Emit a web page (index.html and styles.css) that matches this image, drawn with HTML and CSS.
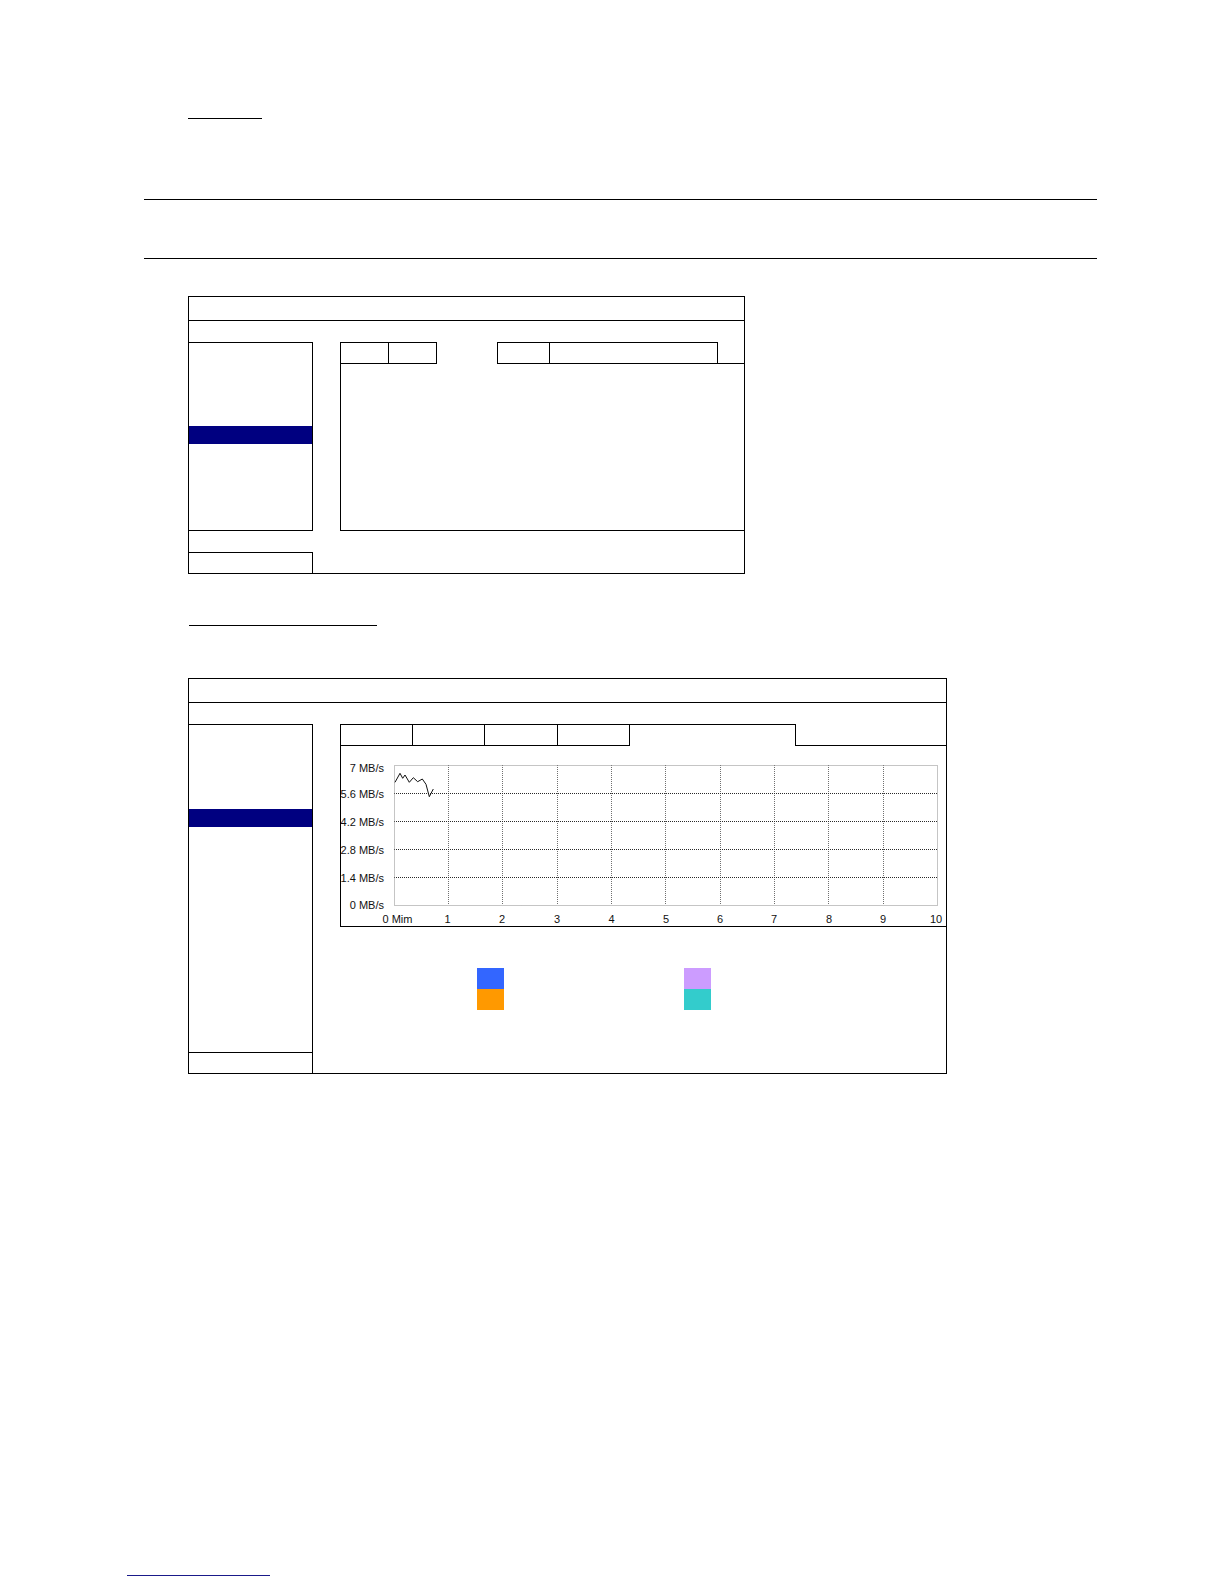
FILE: index.html
```html
<!DOCTYPE html>
<html lang="en">
<head>
<meta charset="utf-8">
<title>Manual page</title>
<link rel="stylesheet" href="styles.css">
</head>
<body>
<div class="page">
  <div class="heading-rule heading-rule--short"></div>

  <div class="section-rule section-rule--first"></div>
  <div class="section-rule section-rule--second"></div>

  <div class="screen screen--one">
    <div class="screen__title"></div>
    <div class="screen__body">
      <div class="side side--boxed">
        <div class="side__menu">
          <div class="side__selected side__selected--one"></div>
        </div>
        <div class="side__foot side__foot--detached"></div>
      </div>
      <div class="main main--one">
        <div class="tabs">
          <div class="tab tab--w48"></div>
          <div class="tab tab--w48"></div>
          <div class="tab tab--open tab--w60"></div>
          <div class="tab tab--boxed tab--w53"></div>
          <div class="tab tab--w168"></div>
          <div class="tab-fill"></div>
        </div>
        <div class="main__content"></div>
      </div>
    </div>
  </div>

  <div class="heading-rule heading-rule--long"></div>

  <div class="screen screen--two">
    <div class="screen__title"></div>
    <div class="screen__body">
      <div class="side side--full">
        <div class="side__menu side__menu--grow">
          <div class="side__selected side__selected--two"></div>
        </div>
        <div class="side__foot"></div>
      </div>
      <div class="right">
        <div class="main main--two">
          <div class="tabs">
            <div class="tab tab--w72"></div>
            <div class="tab tab--w72"></div>
            <div class="tab tab--w73"></div>
            <div class="tab tab--w72"></div>
            <div class="tab tab--current tab--w166"></div>
            <div class="tab-fill"></div>
          </div>
          <div class="chart">
            <svg class="chart__svg" width="605" height="180" viewBox="0 0 605 180" xmlns="http://www.w3.org/2000/svg">
              <g class="grid-cols">
                <line x1="107.5" y1="19" x2="107.5" y2="159"/>
                <line x1="161.5" y1="19" x2="161.5" y2="159"/>
                <line x1="216.5" y1="19" x2="216.5" y2="159"/>
                <line x1="270.5" y1="19" x2="270.5" y2="159"/>
                <line x1="324.5" y1="19" x2="324.5" y2="159"/>
                <line x1="379.5" y1="19" x2="379.5" y2="159"/>
                <line x1="433.5" y1="19" x2="433.5" y2="159"/>
                <line x1="487.5" y1="19" x2="487.5" y2="159"/>
                <line x1="542.5" y1="19" x2="542.5" y2="159"/>
              </g>
              <g class="grid-rows">
                <line x1="53" y1="47.5" x2="597" y2="47.5"/>
                <line x1="53" y1="75.5" x2="597" y2="75.5"/>
                <line x1="53" y1="103.5" x2="597" y2="103.5"/>
                <line x1="53" y1="131.5" x2="597" y2="131.5"/>
              </g>
              <rect class="grid-frame" x="53.5" y="19.5" width="543" height="140"/>
              <polyline class="trace" points="54,36.3 59,27.3 61.7,32.3 64,29 68.3,36.3 72.3,31.7 76.7,35.7 81.3,33 85,38.3 88.3,50.7 92.3,43"/>
              <g class="axis-y">
                <text x="43" y="25.5">7 MB/s</text>
                <text x="43" y="51.5">5.6 MB/s</text>
                <text x="43" y="80">4.2 MB/s</text>
                <text x="43" y="108">2.8 MB/s</text>
                <text x="43" y="136">1.4 MB/s</text>
                <text x="43" y="163">0 MB/s</text>
              </g>
              <g class="axis-x">
                <text x="56.5" y="177">0 Mim</text>
                <text x="106.5" y="177">1</text>
                <text x="161" y="177">2</text>
                <text x="216" y="177">3</text>
                <text x="270.5" y="177">4</text>
                <text x="325" y="177">5</text>
                <text x="379" y="177">6</text>
                <text x="433" y="177">7</text>
                <text x="488" y="177">8</text>
                <text x="542" y="177">9</text>
                <text x="595" y="177">10</text>
              </g>
            </svg>
          </div>
        </div>
        <div class="legend">
          <div class="legend__pair">
            <span class="swatch swatch--blue"></span>
            <span class="swatch swatch--orange"></span>
          </div>
          <div class="legend__pair">
            <span class="swatch swatch--violet"></span>
            <span class="swatch swatch--teal"></span>
          </div>
        </div>
      </div>
    </div>
  </div>

  <div class="link-rule"></div>
</div>
</body>
</html>
```

FILE: styles.css
```css
* {
  box-sizing: border-box;
}

html, body {
  margin: 0;
  padding: 0;
  background: #ffffff;
}

body {
  font-family: "Liberation Sans", Arial, sans-serif;
  color: #111111;
  width: 1224px;
  min-height: 1584px;
}

.page {
  display: flex;
  flex-direction: column;
  align-items: flex-start;
  padding-top: 118px;
  padding-bottom: 8px;
}

/* underlines of (blank) headings */
.heading-rule {
  height: 1px;
  background: #000000;
}

.heading-rule--short {
  margin-left: 188px;
  width: 74px;
}

.heading-rule--long {
  margin-left: 189px;
  width: 188px;
  margin-top: 51px;
}

/* section separator rules */
.section-rule {
  height: 1px;
  margin-left: 144px;
  width: 953px;
  background: #000000;
}

.section-rule--first {
  margin-top: 80px;
}

.section-rule--second {
  margin-top: 58px;
}

/* the two screen mock-ups */
.screen {
  margin-left: 188px;
  border: 1px solid #000000;
  display: flex;
  flex-direction: column;
}

.screen--one {
  width: 557px;
  height: 278px;
  margin-top: 37px;
}

.screen--two {
  width: 759px;
  height: 396px;
  margin-top: 52px;
}

.screen__title {
  height: 24px;
  flex: none;
  border-bottom: 1px solid #000000;
}

.screen__body {
  flex: 1;
  display: flex;
  align-items: flex-start;
}

/* left menu column */
.side {
  width: 124px;
  flex: none;
  display: flex;
  flex-direction: column;
}

.side--boxed .side__menu {
  margin-top: 21px;
  height: 189px;
  border-top: 1px solid #000000;
  border-right: 1px solid #000000;
  border-bottom: 1px solid #000000;
}

.side--boxed .side__foot {
  margin-top: 21px;
  height: 21px;
  border-top: 1px solid #000000;
  border-right: 1px solid #000000;
}

.side--full {
  align-self: stretch;
  margin-top: 21px;
  border-top: 1px solid #000000;
  border-right: 1px solid #000000;
}

.side__menu--grow {
  flex: 1;
}

.side--full .side__foot {
  height: 21px;
  flex: none;
  border-top: 1px solid #000000;
}

.side__selected {
  height: 18px;
  background: #000080;
}

.side__selected--one {
  margin-top: 83px;
}

.side__selected--two {
  margin-top: 84px;
}

/* main panel with tabs */
.main {
  border-left: 1px solid #000000;
  border-bottom: 1px solid #000000;
  display: flex;
  flex-direction: column;
}

.main--one {
  margin-left: 27px;
  margin-top: 21px;
  flex: 1;
  height: 189px;
}

.right {
  margin-left: 27px;
  flex: 1;
  display: flex;
  flex-direction: column;
}

.main--two {
  margin-top: 21px;
  height: 203px;
}

.tabs {
  display: flex;
  height: 22px;
  flex: none;
}

.tab {
  height: 22px;
  flex: none;
  border-top: 1px solid #000000;
  border-right: 1px solid #000000;
  border-bottom: 1px solid #000000;
}

.tab--open {
  border: none;
}

.tab--boxed {
  border-left: 1px solid #000000;
}

.tab--current {
  border-bottom: none;
}

.tab--w48 { width: 48px; }
.tab--w53 { width: 53px; }
.tab--w60 { width: 60px; }
.tab--w72 { width: 72px; }
.tab--w73 { width: 73px; }
.tab--w166 { width: 166px; }
.tab--w168 { width: 168px; }

.tab-fill {
  flex: 1;
  height: 22px;
  border-bottom: 1px solid #000000;
}

.main__content {
  flex: 1;
}

/* bandwidth chart */
.chart {
  height: 180px;
}

.chart__svg {
  display: block;
  font-family: "Liberation Sans", Arial, sans-serif;
  font-size: 11px;
}

.grid-cols line {
  stroke: #707070;
  stroke-width: 1;
  stroke-dasharray: 1 1;
}

.grid-rows line {
  stroke: #2a2a2a;
  stroke-width: 1;
  stroke-dasharray: 1 1;
}

.grid-frame {
  fill: none;
  stroke: #8a8a8a;
  stroke-width: 1;
  stroke-dasharray: 1 1;
}

.trace {
  fill: none;
  stroke: #111111;
  stroke-width: 1;
}

.axis-y text {
  fill: #111111;
  text-anchor: end;
}

.axis-x text {
  fill: #111111;
  text-anchor: middle;
}

/* legend colour keys */
.legend {
  display: flex;
  gap: 180px;
  padding-left: 137px;
  margin-top: 41px;
}

.legend__pair {
  display: flex;
  flex-direction: column;
}

.swatch {
  display: block;
  width: 27px;
  height: 21px;
}

.swatch--blue { background: #3366ff; }
.swatch--orange { background: #ff9900; }
.swatch--violet { background: #cc9cff; }
.swatch--teal { background: #33cccc; }

/* footer link underline */
.link-rule {
  margin-top: 501px;
  margin-left: 127px;
  width: 143px;
  height: 1px;
  background: #1a1a8a;
}
```
